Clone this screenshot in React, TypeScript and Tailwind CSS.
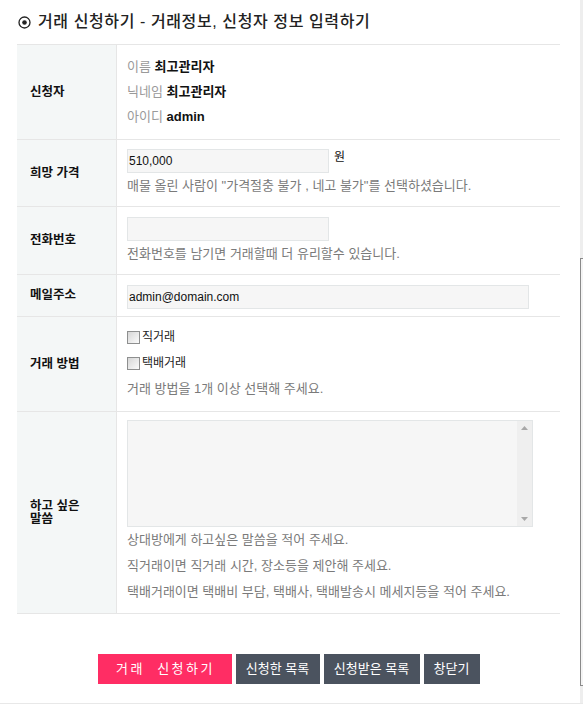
import React from "react";

const Row: React.FC<{ label: React.ReactNode; children: React.ReactNode; className?: string }> = ({
  label,
  children,
  className,
}) => (
  <div className="flex border-b border-[#e6e6e6]">
    <div className="w-[100px] shrink-0 bg-[#f4f7f7] border-r border-[#e6e6e6] flex items-center pl-[13px] pr-[22px] text-[12.5px] font-bold text-[#111] leading-[13px]">
      {label}
    </div>
    <div className={"flex-1 pl-[10px] " + (className || "")}>{children}</div>
  </div>
);

const Check: React.FC<{ label: string }> = ({ label }) => (
  <label className="flex items-center h-[26px] text-[12px] text-[#222]">
    <span className="w-[13px] h-[13px] border border-[#8e8f8f] bg-gradient-to-br from-[#d6d6d6] to-[#fbfbfb] mr-[2px]" />
    {label}
  </label>
);

const Help: React.FC<{ children: React.ReactNode; className?: string }> = ({ children, className }) => (
  <p className={"text-[13px] text-[#7a7a7a] " + (className || "leading-[26px]")}>{children}</p>
);

export default function App() {
  return (
    <div className="flex h-[704px] border-b border-[#e8e8e8] bg-white font-['Liberation_Sans','Noto_Sans_CJK_KR',sans-serif]">
      <div className="flex-1 pl-[17px] pr-[20px]">
        <div className="h-[45px] flex items-center border-b border-[#e6e6e6] pl-[1px]">
          <svg width="13" height="13" viewBox="0 0 13 13" className="mr-[7px]">
            <circle cx="6.5" cy="6.5" r="5.5" fill="none" stroke="#222" strokeWidth="1.3" />
            <circle cx="6.5" cy="6.5" r="2.3" fill="#222" />
          </svg>
          <h1 className="text-[16px] font-medium text-[#222] tracking-[0.6px]">
            거래 신청하기 - 거래정보, 신청자 정보 입력하기
          </h1>
        </div>

        <Row label="신청자" className="pt-[9px] pb-[10px]">
          <p className="text-[13px] leading-[25px]">
            <span className="text-[#9a9a9a]">이름 </span>
            <b className="text-[#111]">최고관리자</b>
          </p>
          <p className="text-[13px] leading-[25px]">
            <span className="text-[#9a9a9a]">닉네임 </span>
            <b className="text-[#111]">최고관리자</b>
          </p>
          <p className="text-[13px] leading-[25px]">
            <span className="text-[#9a9a9a]">아이디 </span>
            <b className="text-[#111]">admin</b>
          </p>
        </Row>

        <Row label="희망 가격" className="pt-[9px] pb-[10px]">
          <div className="flex items-start">
            <input
              defaultValue="510,000"
              className="w-[202px] h-[24px] bg-[#f6f6f6] border border-[#e3e6e7] px-[1px] text-[12px] text-[#111] outline-none"
            />
            <span className="ml-[5px] text-[12px] text-[#111] leading-[16px]">원</span>
          </div>
          <Help className="mt-[3px] leading-[20px]">
            매물 올린 사람이 "가격절충 불가 , 네고 불가"를 선택하셨습니다.
          </Help>
        </Row>

        <Row label="전화번호" className="pt-[10px] pb-[10px]">
          <input className="w-[202px] h-[24px] bg-[#f6f6f6] border border-[#e3e6e7] outline-none" />
          <Help className="mt-[3px] leading-[20px]">전화번호를 남기면 거래할때 더 유리할수 있습니다.</Help>
        </Row>

        <Row label="메일주소" className="pt-[10px] pb-[7px]">
          <input
            defaultValue="admin@domain.com"
            className="w-[402px] h-[24px] bg-[#f6f6f6] border border-[#e3e6e7] px-[1px] text-[12px] text-[#111] outline-none block"
          />
        </Row>

        <Row label="거래 방법" className="pt-[7px] pb-[9px]">
          <Check label="직거래" />
          <Check label="택배거래" />
          <Help>거래 방법을 1개 이상 선택해 주세요.</Help>
        </Row>

        <Row label="하고 싶은 말씀" className="pt-[8px] pb-[8px]">
          <div className="flex w-[406px] h-[107px] bg-[#f6f6f6] border border-[#e3e6e7]">
            <textarea className="flex-1 resize-none bg-transparent outline-none overflow-hidden" />
            <div className="w-[15px] bg-[#efefef] flex flex-col items-center justify-between py-[5px]">
              <svg width="7" height="4" viewBox="0 0 7 4">
                <path d="M3.5 0 L7 4 L0 4 Z" fill="#a8a8a8" />
              </svg>
              <svg width="7" height="4" viewBox="0 0 7 4">
                <path d="M0 0 L7 0 L3.5 4 Z" fill="#a8a8a8" />
              </svg>
            </div>
          </div>
          <Help>상대방에게 하고싶은 말씀을 적어 주세요.</Help>
          <Help>직거래이면 직거래 시간, 장소등을 제안해 주세요.</Help>
          <Help>택배거래이면 택배비 부담, 택배사, 택배발송시 메세지등을 적어 주세요.</Help>
        </Row>

        <div className="flex justify-center gap-[4px] mt-[40px] text-[13px] text-white">
          <button className="w-[134px] h-[30px] bg-[#ff2d64] tracking-[2.5px] pl-[2px] whitespace-pre">거래  신청하기</button>
          <button className="w-[84px] h-[30px] bg-[#4b535f]">신청한 목록</button>
          <button className="w-[96px] h-[30px] bg-[#4b535f]">신청받은 목록</button>
          <button className="w-[56px] h-[30px] bg-[#4b535f]">창닫기</button>
        </div>
      </div>
      <div className="w-[3px] bg-[#eeeeee] flex flex-col">
        <div className="h-[258px]" />
        <div className="h-[428px] border-l border-t border-b border-[#8a8a8a] bg-[#f4f4f4]" />
      </div>
    </div>
  );
}
